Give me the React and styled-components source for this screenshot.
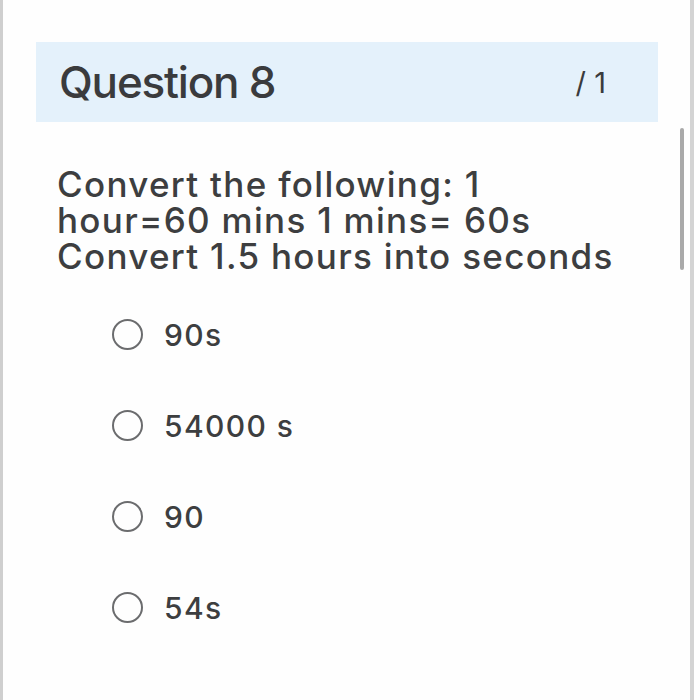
import React from 'react'
import styled, { createGlobalStyle } from 'styled-components'

const GlobalStyle = createGlobalStyle`
  html,
  body {
    margin: 0;
    padding: 0;
    background: #ffffff;
  }

  body {
    font-family: Inter, 'Noto Sans', 'Liberation Sans', sans-serif;
    color: #3d3e40;
  }
`

const Frame = styled.div`
  position: relative;
  box-sizing: border-box;
  width: 694px;
  height: 700px;
  overflow: hidden;
  background: #fefefe;
  border-left: 3px solid #cfcfcf;
  border-right: 4px solid #d4d4d4;
  padding: 42px 32px 0 33px;
`

const Header = styled.div`
  display: flex;
  align-items: center;
  justify-content: space-between;
  height: 80px;
  padding: 0 52px 0 23px;
  background: #e4f1fb;
`

const Title = styled.h2`
  margin: 0;
  font-size: 44px;
  font-weight: 500;
  letter-spacing: -1.2px;
  color: #3a3b3d;
`

const Points = styled.span`
  font-size: 29px;
  font-weight: 400;
  color: #3a3b3d;
`

const Prompt = styled.p`
  margin: 44px 0 0 21px;
  font-size: 35px;
  line-height: 36px;
  font-weight: 500;
  letter-spacing: 1.3px;
  color: #3d3e40;
`

const Options = styled.ul`
  list-style: none;
  margin: 45px 0 0 76px;
  padding: 0;
  display: flex;
  flex-direction: column;
  gap: 60px;
`

const Option = styled.li`
  display: flex;
  align-items: center;
  gap: 21px;
  height: 31px;
`

const Radio = styled.span`
  box-sizing: border-box;
  width: 31px;
  height: 31px;
  border-radius: 50%;
  border: 2px solid #6b6c6e;
  flex-shrink: 0;
`

const OptionLabel = styled.span`
  font-size: 30px;
  font-weight: 500;
  letter-spacing: 1.4px;
  color: #3d3e40;
`

const ScrollThumb = styled.div`
  position: absolute;
  top: 128px;
  right: 6px;
  width: 4px;
  height: 142px;
  border-radius: 2px;
  background: #a9a9a9;
`

const answers = ['90s', '54000 s', '90', '54s']

const App = () => (
  <>
    <GlobalStyle />
    <Frame>
      <Header>
        <Title>Question 8</Title>
        <Points>/ 1</Points>
      </Header>

      <Prompt>
        Convert the following: 1
        <br />
        hour=60 mins 1 mins= 60s
        <br />
        Convert 1.5 hours into seconds
      </Prompt>

      <Options>
        {answers.map((answer) => (
          <Option key={answer}>
            <Radio />
            <OptionLabel>{answer}</OptionLabel>
          </Option>
        ))}
      </Options>

      <ScrollThumb />
    </Frame>
  </>
)

export default App
